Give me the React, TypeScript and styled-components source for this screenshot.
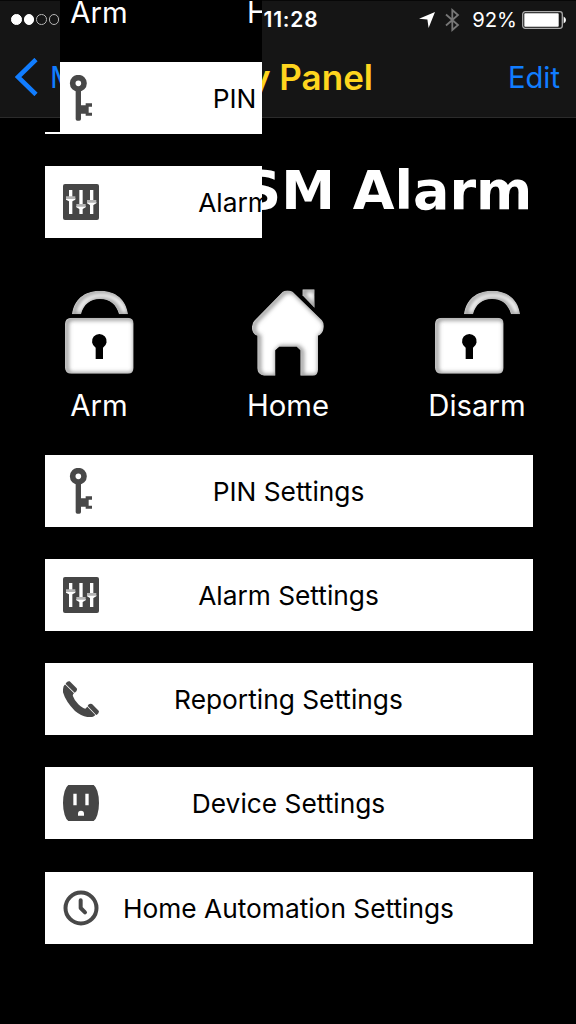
import { ReactNode } from 'react';
import styled, { createGlobalStyle } from 'styled-components';

const KeyIcon = () => (
  <svg width='36' height='46' viewBox='0 0 108 138' fill='#484848'>
    <circle cx='46' cy='25' r='17' fill='none' stroke='#484848' strokeWidth='17' />
    <path d='M38 44h16v47h14v-6h19v10h-10v18h10v9H68v-6H54v16q0 5-5 5h-6q-5 0-5-5z' />
  </svg>
);

const SlidersIcon = () => (
  <svg width='36' height='36' viewBox='0 0 108 108'>
    <rect width='108' height='108' rx='6' fill='#464646' />
    <path d='M18 18h10v72h-10zM49 18h10v72h-10zM81 18h10v72h-10z' fill='#fff' />
    <path
      d='M9 43h28v4l-9 5H18l-9-5zM40 66h28v4l-9 5H49l-9-5zM72 54h28v4l-9 5H81l-9-5z'
      fill='#fff'
    />
    <path d='M9 37h28v8H9zM40 60h28v8H40zM72 48h28v8H72z' fill='#b4b4b4' />
  </svg>
);

const PhoneIcon = () => (
  <svg width='36' height='36' viewBox='0 0 108 108' fill='#484848'>
    <path d='M5 11Q-1 16 0 34Q8 62 36 90Q58 108 82 109Q92 108 97 102L73 77L67 83Q58 82 46 70Q34 58 30 46Q28 41 33 37L7 11Z' />
    <path d='M9 6Q14-1 20 1L41 22Q44 28 37 34L35 35L8 9Z' />
    <path d='M76 71Q81 66 87 69L107 89Q110 95 101 102L99 101L74 75Z' />
  </svg>
);

const OutletIcon = () => (
  <svg width='36' height='36' viewBox='0 0 108 108'>
    <path
      d='M16 0H92Q99 5 103 18Q108 34 108 54T103 90Q99 103 92 108H16Q9 103 5 90Q0 74 0 54T5 18Q9 5 16 0Z'
      fill='#464646'
    />
    <path d='M31 26h10v35H31zM67 26h10v35H67zM45 92V86a9 9 0 0 1 18 0v6z' fill='#fff' />
  </svg>
);

const ClockIcon = () => (
  <svg width='36' height='36' viewBox='0 0 108 108' fill='none' stroke='#484848'>
    <circle cx='54' cy='54' r='46.5' strokeWidth='12' />
    <path d='M53 31V54L66 67' strokeWidth='12' strokeLinecap='round' strokeLinejoin='round' />
  </svg>
);

const Shaded = ({ id, d }: { id: string; d: string }) => (
  <>
    <defs>
      <clipPath id={id}>
        <path d={d} />
      </clipPath>
      <filter id={`${id}-blur`} x='-20%' y='-20%' width='140%' height='140%'>
        <feGaussianBlur stdDeviation='7' />
      </filter>
    </defs>
    <g clipPath={`url(#${id})`}>
      <path d={d} fill='#fff' />
      <path
        d={d}
        fill='none'
        stroke='#888'
        strokeWidth='11'
        filter={`url(#${id}-blur)`}
        transform='translate(5 2)'
      />
    </g>
  </>
);

const lockBody =
  'M20 86H188Q206 86 206 104V236Q206 254 188 254H20Q0 254 0 236V104Q0 86 20 86Z';
const keyhole = 'M92 210V176A22 22 0 1 1 114 176V210Z';

const LockIcon = ({ id, open }: { id: string; open?: boolean }) => (
  <svg
    width={open ? 85 : 69}
    height='85'
    viewBox={open ? '0 0 255 255' : '0 0 207 255'}
  >
    <g transform={open ? 'translate(66 0)' : undefined}>
      <Shaded
        id={`${id}-arc`}
        d='M21 76C26 32 58 5 105 5S184 32 189 76H162C154 46 134 30 105 30S56 46 48 76Z'
      />
    </g>
    <Shaded id={`${id}-body`} d={lockBody} />
    <path d={keyhole} fill='#000' />
  </svg>
);

const HomeIcon = ({ id }: { id: string }) => (
  <svg width='72' height='87' viewBox='0 0 216 261'>
    <Shaded
      id={`${id}-house`}
      d='M92 8Q106 1 122 8L210 94Q218 104 214 122Q210 136 198 140V242Q198 260 182 260H145V184L134 173H82L70 184V260H36Q16 258 16 238V140Q2 136 0 120Q-1 104 6 96Z'
    />
    <Shaded id={`${id}-chimney`} d='M151 1H188V57L151 19Z' />
  </svg>
);

const rows: { label: string; icon: ReactNode }[] = [
  { label: 'PIN Settings', icon: <KeyIcon /> },
  { label: 'Alarm Settings', icon: <SlidersIcon /> },
  { label: 'Reporting Settings', icon: <PhoneIcon /> },
  { label: 'Device Settings', icon: <OutletIcon /> },
  { label: 'Home Automation Settings', icon: <ClockIcon /> },
];

const Panel = ({ id, count }: { id: string; count: number }) => (
  <PanelBody>
    <Actions>
      <Action>
        <LockIcon id={`${id}-arm`} />
        <ActionLabel>Arm</ActionLabel>
      </Action>
      <Action>
        <HomeIcon id={`${id}-home`} />
        <ActionLabel>Home</ActionLabel>
      </Action>
      <Action>
        <LockIcon id={`${id}-disarm`} open />
        <ActionLabel>Disarm</ActionLabel>
      </Action>
    </Actions>
    <Rows>
      {rows.slice(0, count).map(row => (
        <Row key={row.label}>
          <RowIcon>{row.icon}</RowIcon>
          <RowLabel>{row.label}</RowLabel>
        </Row>
      ))}
    </Rows>
  </PanelBody>
);

export default function App() {
  return (
    <Screen>
      <GlobalStyle />
      <Header>
        <StatusBar>
          <Signal>
            <Dot $filled />
            <Dot $filled />
            <Dot />
            <Dot />
          </Signal>
          <Time>11:28</Time>
          <StatusRight>
            <svg width='16' height='16' viewBox='0 0 16 16' fill='#fff'>
              <path d='M16 0L9.6 16L8.4 7.6L0 6.8Z' />
            </svg>
            <Bluetooth width='15' height='24' viewBox='0 0 15 24'>
              <path d='M1 6.5L13 17L7.3 22V2L13 7L1 17.5' />
            </Bluetooth>
            <Percent>92%</Percent>
            <Battery width='45' height='18' viewBox='0 0 45 18'>
              <rect x='.7' y='.7' width='39.6' height='16.6' rx='2.5' fill='none' stroke='#aaa' strokeWidth='1.3' />
              <rect x='2.3' y='2.3' width='34.4' height='13.4' rx='.8' fill='#fff' />
              <path d='M41.6 5.5Q44 6.5 44 9T41.6 12.5Z' fill='#fff' />
            </Battery>
          </StatusRight>
        </StatusBar>
        <NavBar>
          <Back>
            <svg width='23' height='38' viewBox='0 0 23 38'>
              <path d='M21 1.5L3 19L21 36.5' fill='none' stroke='#117dff' strokeWidth='4.6' />
            </svg>
            <NavText>Menu</NavText>
          </Back>
          <NavTitle>Security Panel</NavTitle>
          <NavText>Edit</NavText>
        </NavBar>
      </Header>
      <Title>GSM Alarm</Title>
      <Panel id='main' count={5} />
      {/* displaced fragments of the panel, drawn over the header */}
      <Fragment $left={60} $top={0} $height={132}>
        <Shift $x={-60} $y={-104}>
          <Panel id='top' count={1} />
        </Shift>
      </Fragment>
      <Fragment $left={0} $top={132} $height={108}>
        <Shift $x={0} $y={-236}>
          <Panel id='low' count={2} />
        </Shift>
      </Fragment>
    </Screen>
  );
}

const GlobalStyle = createGlobalStyle`
  body {
    margin: 0;
    background: #000;
    font-family: Inter, 'Liberation Sans', sans-serif;
  }
  svg {
    display: block;
    flex-shrink: 0;
  }
`;
const Screen = styled.div`
  position: relative;
  width: 576px;
  height: 1024px;
  overflow: hidden;
  background: #000;
  white-space: nowrap;
`;
const Header = styled.header`
  height: 118px;
  box-sizing: border-box;
  background: #151515;
  border-top: 1px solid #070707;
  border-bottom: 1px solid #2b2b2b;
`;
const StatusBar = styled.div`
  display: grid;
  grid-template-columns: 1fr auto 1fr;
  align-items: center;
  height: 37px;
  padding: 0 9px 0 11px;
  color: #fff;
`;
const Signal = styled.div`
  display: flex;
  gap: 2px;
`;
const Dot = styled.span<{ $filled?: boolean }>`
  width: 10.6px;
  height: 10.6px;
  box-sizing: border-box;
  border: 1px solid ${({ $filled }) => ($filled ? '#fff' : '#b5b5b5')};
  border-radius: 50%;
  background: ${({ $filled }) => ($filled ? '#fff' : 'transparent')};
`;
const Time = styled.div`
  padding-left: 4px;
  font-size: 21px;
  font-weight: 600;
  letter-spacing: 0.8px;
`;
const StatusRight = styled.div`
  display: flex;
  justify-content: flex-end;
  align-items: center;
`;
const Bluetooth = styled.svg`
  margin: 0 12px 0 10px;
  fill: none;
  stroke: #777;
  stroke-width: 1.8;
`;
const Percent = styled.span`
  font-size: 20.3px;
`;
const Battery = styled.svg`
  margin-left: 5px;
`;
const NavBar = styled.nav`
  display: grid;
  grid-template-columns: 100px 258px 1fr;
  align-items: center;
  height: 77px;
  padding: 0 16px 0 15px;

  & > :last-child {
    justify-self: end;
  }
`;
const Back = styled.div`
  display: flex;
  align-items: center;
  gap: 12px;
`;
const NavText = styled.span`
  padding-top: 1px;
  color: #117dff;
  font-size: 29.2px;
`;
const NavTitle = styled.h1`
  justify-self: end;
  margin: 0;
  color: #ffd51e;
  font-size: 35px;
  font-weight: 600;
`;
const Title = styled.h2`
  margin: 0;
  height: 171px;
  padding: 41px 43.7px 0 0;
  box-sizing: border-box;
  color: #fff;
  font: bold 54px/63px 'DejaVu Sans', sans-serif;
  word-spacing: -1px;
  text-align: right;
`;
const PanelBody = styled.section`
  width: 576px;
`;
const Actions = styled.div`
  display: grid;
  grid-template-columns: repeat(3, 189px);
  justify-content: center;
  height: 165.5px;
`;
const Action = styled.div`
  display: flex;
  flex-direction: column;
  align-items: center;
  justify-content: space-between;
  height: 136px;
`;
const ActionLabel = styled.span`
  color: #fff;
  font-size: 29.3px;
  line-height: 38px;
`;
const Rows = styled.div`
  display: flex;
  flex-direction: column;
  gap: 32.3px;
  padding: 0 43px 0 45px;
`;
const Row = styled.div`
  display: grid;
  grid-template-columns: 71.5px 1fr 72.5px;
  align-items: center;
  height: 72px;
  background: #fff;
`;
const RowIcon = styled.div`
  padding-left: 18px;
`;
const RowLabel = styled.span`
  justify-self: center;
  padding-top: 1px;
  color: #000;
  font-size: 26.3px;
`;
const Fragment = styled.div<{ $left: number; $top: number; $height: number }>`
  position: absolute;
  left: ${({ $left }) => $left}px;
  top: ${({ $top }) => $top}px;
  width: ${({ $left }) => 262 - $left}px;
  height: ${({ $height }) => $height}px;
  overflow: hidden;
  background: #000;
`;
const Shift = styled.div<{ $x: number; $y: number }>`
  width: 576px;
  margin-left: ${({ $x }) => $x}px;
  margin-top: ${({ $y }) => $y}px;
`;
